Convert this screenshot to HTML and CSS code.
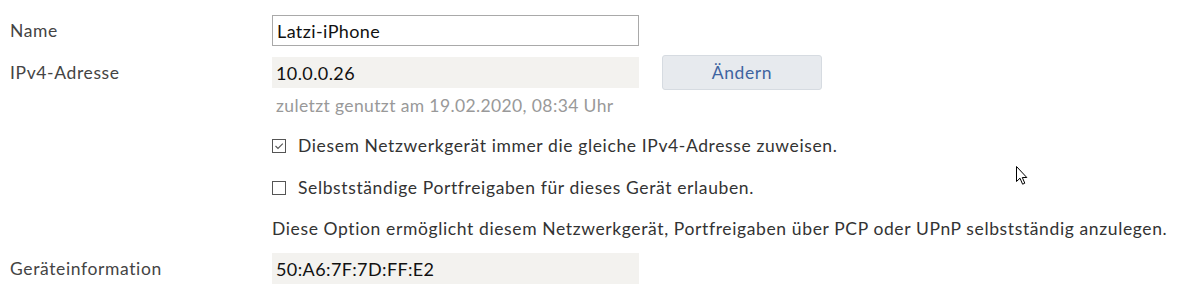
FILE: index.html
```html
<!DOCTYPE html>
<html lang="de">
<head>
<meta charset="utf-8">
<title>Gerät</title>
<link rel="stylesheet" href="styles.css">
</head>
<body>
<div class="form">
  <div class="row row-name">
    <label class="label" for="name">Name</label>
    <input class="input" id="name" type="text" value="Latzi-iPhone">
  </div>
  <div class="row row-ip">
    <span class="label">IPv4-Adresse</span>
    <div class="field">10.0.0.26</div>
    <button class="btn" type="button">Ändern</button>
  </div>
  <div class="indent hint">zuletzt genutzt am 19.02.2020, 08:34 Uhr</div>
  <div class="indent check check-1">
    <span class="box">
      <svg width="14" height="14" viewBox="0 0 14 14"><path d="M3.5 7 L6 9.5 L10.8 4.6" fill="none" stroke="#555" stroke-width="1.1"/></svg>
    </span>
    <span>Diesem Netzwerkgerät immer die gleiche IPv4-Adresse zuweisen.</span>
  </div>
  <div class="indent check check-2">
    <span class="box"></span>
    <span>Selbstständige Portfreigaben für dieses Gerät erlauben.</span>
  </div>
  <div class="indent desc">Diese Option ermöglicht diesem Netzwerkgerät, Portfreigaben über PCP oder UPnP selbstständig anzulegen.</div>
  <div class="row row-info">
    <span class="label">Geräteinformation</span>
    <div class="field">50:A6:7F:7D:FF:E2</div>
  </div>
</div>
<svg class="cursor" width="13" height="20" viewBox="0 0 13 20"><path d="M0.5 0.5 L0.5 15.5 L4 12.2 L6.6 18.2 L8.8 17.2 L6.3 11.5 L10.8 11.5 Z" fill="#fff" stroke="#000" stroke-width="1"/></svg>
</body>
</html>
```

FILE: styles.css
```css
html, body {
  margin: 0;
  padding: 0;
  background: #fff;
}
body {
  font-family: "Lato", "Liberation Sans", sans-serif;
  font-size: 17.5px;
  letter-spacing: 0.62px;
  color: #333;
  position: relative;
  width: 1186px;
  height: 304px;
  overflow: hidden;
}
.form {
  padding: 15px 0 0 10px;
}
.row {
  display: flex;
  align-items: center;
}
.label {
  width: 262px;
  flex: none;
  color: #444;
}
.input, .field {
  box-sizing: border-box;
  width: 367px;
  height: 31px;
  padding: 0 4px;
  font-family: inherit;
  font-size: 18px;
  letter-spacing: 0.4px;
  color: #111;
}
.input {
  border: 1px solid #a9a9a9;
  background: #fff;
  margin: 0;
  outline: none;
}
.field {
  background: #f3f2ef;
  display: flex;
  align-items: center;
}
.row-ip {
  margin-top: 9px;
}
.btn {
  box-sizing: border-box;
  width: 160px;
  height: 35px;
  margin-left: 23px;
  border: 1px solid #d6dbe1;
  border-radius: 3px;
  background: #e7eaee;
  color: #3f64a0;
  font-family: inherit;
  font-size: 17.5px;
  letter-spacing: 0.62px;
}
.indent {
  margin-left: 262px;
  line-height: 24px;
}
.hint {
  margin-top: 4px;
  padding-left: 4px;
  color: #999;
  letter-spacing: 0.38px;
}
.check {
  display: flex;
  align-items: center;
  gap: 12px;
}
.check-1 {
  margin-top: 16px;
}
.check-2 {
  margin-top: 18px;
}
.box {
  box-sizing: border-box;
  width: 14px;
  height: 14px;
  border: 1px solid #555;
  display: flex;
}
.box svg {
  margin: -1px;
}
.desc {
  margin-top: 17px;
}
.row-info {
  margin-top: 12px;
}
.cursor {
  position: absolute;
  left: 1016px;
  top: 166px;
}
```
